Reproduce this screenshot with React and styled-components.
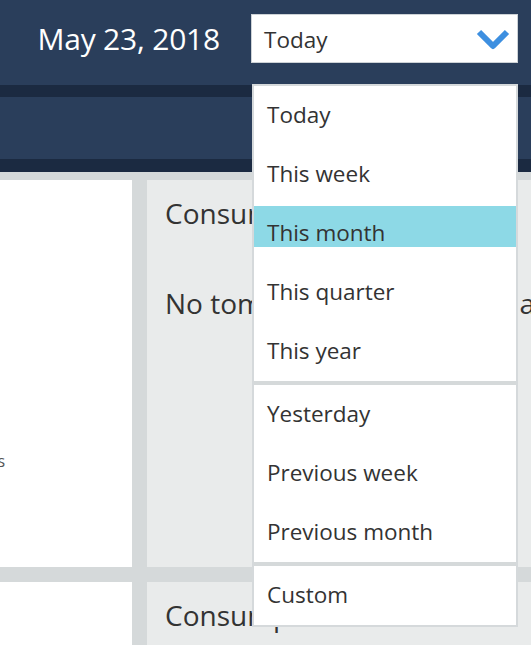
import React from "react";
import styled, { createGlobalStyle } from "styled-components";

const Global = createGlobalStyle`
  html, body { margin: 0; padding: 0; background: #d5d9da; }
  body { font-family: "Open Sans", "Noto Sans", sans-serif; overflow: hidden; }
`;

const Page = styled.div`
  position: relative;
  width: 531px;
  height: 645px;
  overflow: hidden;
  background: #d5d9da;
  font-family: "Open Sans", "Noto Sans", sans-serif;
  display: flex;
  flex-direction: column;
`;

const TopBar = styled.header`
  height: 85px;
  flex: none;
  box-sizing: border-box;
  background: #2a3e5b;
  display: flex;
  justify-content: flex-end;
  align-items: flex-start;
  gap: 31px;
  padding: 14px 13px 0 0;
`;

const DateLabel = styled.div`
  color: #ffffff;
  font-size: 30px;
  line-height: 50px;
  letter-spacing: -0.2px;
`;

const Select = styled.div`
  width: 267px;
  height: 49px;
  box-sizing: border-box;
  background: #ffffff;
  border: 1px solid #cdd2d6;
  display: flex;
  align-items: center;
  justify-content: space-between;
  padding: 1px 6px 0 12px;
  color: #333333;
  font-size: 22.5px;
`;

const SubBar = styled.div`
  height: 62px;
  flex: none;
  background: #2a3e5b;
  border-top: 12px solid #1b2a41;
  border-bottom: 13px solid #1b2a41;
`;

const Content = styled.main`
  flex: 1;
  display: grid;
  grid-template-columns: 132px 1fr;
  grid-template-rows: 387px 1fr;
  gap: 15px;
  padding-top: 8px;
  min-height: 0;
`;

const Card = styled.section`
  background: ${(p) => (p.$muted ? "#e9ebeb" : "#ffffff")};
  padding: ${(p) => (p.$muted ? "14px 0 0 18px" : "0")};
  overflow: hidden;
  white-space: nowrap;
  color: #333333;
`;

const CardTitle = styled.div`
  font-size: 28px;
  line-height: 38px;
`;

const CardMessage = styled.div`
  font-size: 28px;
  line-height: 38px;
  margin-top: 52px;
`;

const SideNote = styled.div`
  font-size: 16px;
  color: #555;
  margin: 270px 0 0 -38px;
`;

const Menu = styled.ul`
  position: absolute;
  top: 84px;
  left: 252px;
  width: 266px;
  box-sizing: border-box;
  margin: 0;
  padding: 0;
  list-style: none;
  background: #ffffff;
  border: 2px solid #d5d9db;
`;

const Group = styled.li`
  border-top: ${(p) => (p.$first ? "none" : "4px solid #d5d9da")};
  ul { margin: 0; padding: 0; list-style: none; }
`;

const Item = styled.li`
  height: 59px;
  line-height: 58px;
  padding-left: 13px;
  font-size: 22.5px;
  color: #333333;
  background: ${(p) =>
    p.$active
      ? "linear-gradient(to bottom, transparent 2px, #8dd9e6 2px, #8dd9e6 43px, transparent 43px)"
      : "transparent"};
`;

const Chevron = () => (
  <svg width="36" height="24" viewBox="0 0 36 24">
    <polyline
      points="4,5 18,19 32,5"
      fill="none"
      stroke="#3d8fe0"
      strokeWidth="6"
      strokeLinejoin="round"
    />
  </svg>
);

const groups = [
  ["Today", "This week", "This month", "This quarter", "This year"],
  ["Yesterday", "Previous week", "Previous month"],
  ["Custom"],
];

export default function App() {
  return (
    <Page>
      <Global />
      <TopBar>
        <DateLabel>May 23, 2018</DateLabel>
        <Select>
          <span>Today</span>
          <Chevron />
        </Select>
      </TopBar>
      <SubBar />
      <Content>
        <Card>
          <SideNote>Alerts</SideNote>
        </Card>
        <Card $muted>
          <CardTitle>Consumption</CardTitle>
          <CardMessage>No tomorrow jobs are available</CardMessage>
        </Card>
        <Card />
        <Card $muted>
          <CardTitle>Consumption</CardTitle>
        </Card>
      </Content>
      <Menu>
        {groups.map((g, gi) => (
          <Group key={gi} $first={gi === 0}>
            <ul>
              {g.map((label) => (
                <Item key={label} $active={label === "This month"}>
                  {label}
                </Item>
              ))}
            </ul>
          </Group>
        ))}
      </Menu>
    </Page>
  );
}
